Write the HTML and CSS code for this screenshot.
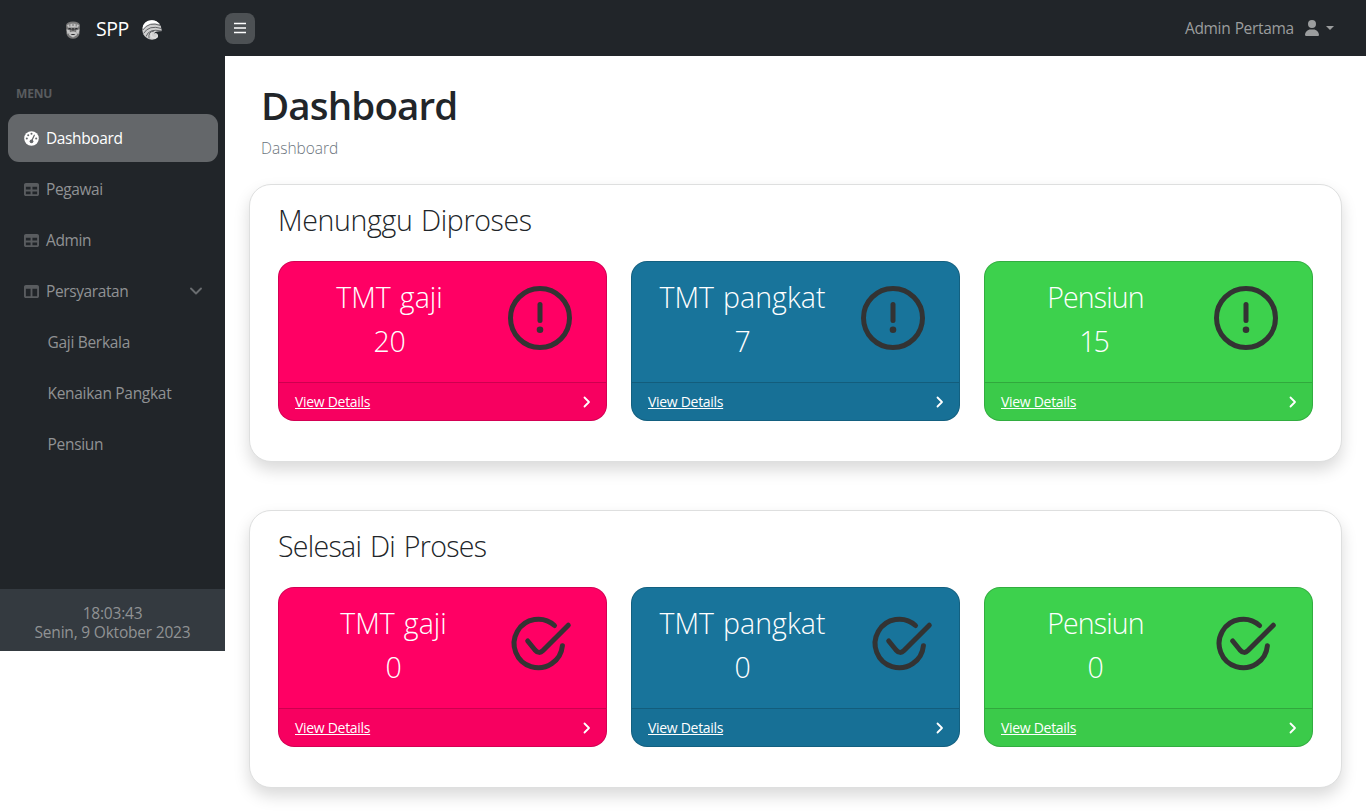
FILE: index.html
```html
<!DOCTYPE html>
<html lang="id">
<head>
<meta charset="utf-8">
<title>Dashboard - SPP</title>
<link rel="stylesheet" href="styles.css">
</head>
<body>
<svg class="defs" aria-hidden="true">
  <symbol id="table" viewBox="0 0 512 512"><path fill-rule="evenodd" d="M64 256v-96h160v96H64zm0 64h160v96H64v-96zm224 96v-96h160v96H288zm160-160H288v-96h160v96zM64 32C28.700 32 0 60.700 0 96v320c0 35.300 28.700 64 64 64h384c35.300 0 64-28.700 64-64V96c0-35.300-28.700-64-64-64H64z"/></symbol>
  <symbol id="columns" viewBox="0 0 512 512"><path fill-rule="evenodd" d="M0 96c0-35.300 28.700-64 64-64h384c35.300 0 64 28.700 64 64v320c0 35.300-28.700 64-64 64H64c-35.300 0-64-28.700-64-64V96zm64 64v256h160V160H64zm384 0H288v256h160V160z"/></symbol>
  <symbol id="right" viewBox="0 0 8 14"><path d="M1.500 2.500 6 7l-4.500 4.500" fill="none" stroke="currentColor" stroke-width="1.800" stroke-linecap="round" stroke-linejoin="round"/></symbol>
  <symbol id="alert" viewBox="0 0 64 64"><circle cx="32" cy="32" r="29.500" fill="none" stroke="currentColor" stroke-width="5"/><path d="M32 18.500v16" stroke="currentColor" stroke-width="5" stroke-linecap="round"/><circle cx="32" cy="43.700" r="3.300"/></symbol>
  <symbol id="check" viewBox="0 0 64 64"><path d="M46.500 13.500A24.200 24.200 0 1 0 54.400 33.700M19.700 29l7.300 9q4 4.500 8 .5L60.300 13.200" fill="none" stroke="currentColor" stroke-width="5" stroke-linecap="round"/></symbol>
</svg>
<header class="topbar">
  <a class="brand">
    <svg class="brand-crest" viewBox="0 0 16 18"><path d="M1 4Q2 .5 8 .5T15 4L14.500 13Q13 17.700 8 17.700T1.500 13Z" fill="#777"/><path d="M2 4Q8 1 14 4L13 6.500H3ZM1.500 8.500l3-.5.5 4-2.500 1zM14.500 8.500l-3-.5-.5 4 2.500 1zM4.500 11.500q3.500-2 7 0l.5 2.500-4 2.500L4 14z" fill="#c4c4c4"/><path d="M4 2.500h1.500v3H4zM10.500 2.500H12v3h-1.500zM7.200 2h1.600v3H7.200z" fill="#8d8d8d"/><path d="M2.500 8.500q2-3 4.500 0zM9 8.500q2.500-3 4.500 0zM5.500 13.500q2.500-1 5 0l-1 .6h-3z" fill="#202124"/><path d="M7 7h2v2.500H7z" fill="#444"/></svg>
    <span class="brand-name">SPP</span>
    <svg class="brand-wave" viewBox="0 0 20 20"><circle cx="10" cy="10" r="9.700" fill="#cfcfcf"/><path d="M.5 8Q2 0 10 .3 15 .5 17.500 4 8 1 1 9z" fill="#fff"/><path d="M.8 10Q7 1 18.500 5.500M1.500 13.500Q7 4.500 19.500 8.500M4 16.500Q7 8 19.500 11M7 18.500Q6 11.500 12 11" fill="none" stroke="#45484b" stroke-width=".8"/><path d="M20 11.300Q13.500 10.500 12 13.500q2-1 3.500.5 1.500 2.500-1 4L13 20h7z" fill="#212529"/><path d="M9.500 13q-1.500 4.500 3.500 5 3-.5 2-3" fill="none" stroke="#ddd" stroke-width="1.500"/></svg>
  </a>
  <button class="toggle" aria-label="Menu"><svg viewBox="0 0 14 14"><path d="M1 2.500h12M1 7h12M1 11.500h12" stroke="currentColor" stroke-width="1.700"/></svg></button>
  <div class="user"><span class="user-name">Admin Pertama</span><svg class="user-icon" viewBox="0 0 448 512"><path d="M224 256a128 128 0 1 0 0-256 128 128 0 1 0 0 256zm-45.700 48C79.800 304 0 383.800 0 482.300 0 498.700 13.300 512 29.700 512h388.600c16.400 0 29.700-13.300 29.700-29.700C448 383.800 368.200 304 269.700 304h-91.400z"/></svg><i class="caret"></i></div>
</header>
<div class="layout">
  <aside class="sidebar">
    <div class="heading">MENU</div>
    <nav class="menu">
      <a class="link active"><svg class="link-icon" viewBox="0 0 16 16"><circle cx="8" cy="8" r="7.800"/><g fill="#64676a"><circle cx="8" cy="3" r="1.100"/><circle cx="4.500" cy="4.500" r="1.100"/><circle cx="3" cy="8" r="1.100"/><circle cx="13" cy="8" r="1.100"/><circle cx="8" cy="11" r="2"/></g><path d="m8 11 3-6.500" stroke="#64676a" stroke-width="1.300" stroke-linecap="round"/></svg><span>Dashboard</span></a>
      <a class="link"><svg class="link-icon"><use href="#table"/></svg><span>Pegawai</span></a>
      <a class="link"><svg class="link-icon"><use href="#table"/></svg><span>Admin</span></a>
      <a class="link"><svg class="link-icon"><use href="#columns"/></svg><span>Persyaratan</span><svg class="down" viewBox="0 0 14 16"><path d="m2 5.500 5 5 5-5" fill="none" stroke="currentColor" stroke-width="1.900" stroke-linecap="round" stroke-linejoin="round"/></svg></a>
      <a class="link sub">Gaji Berkala</a>
      <a class="link sub">Kenaikan Pangkat</a>
      <a class="link sub">Pensiun</a>
    </nav>
    <footer class="clock">18:03:43<br>Senin, 9 Oktober 2023</footer>
  </aside>
  <main class="content">
    <h1 class="title">Dashboard</h1>
    <div class="crumb">Dashboard</div>
    <section class="panel">
      <h2 class="panel-title waiting">Menunggu Diproses</h2>
      <div class="cards">
        <article class="card pink"><div class="card-body"><div class="stat"><div class="label">TMT gaji</div><div>20</div></div><svg class="status"><use href="#alert"/></svg></div><div class="card-foot"><a class="details">View Details</a><svg class="arrow"><use href="#right"/></svg></div></article>
        <article class="card blue"><div class="card-body"><div class="stat"><div class="label">TMT pangkat</div><div>7</div></div><svg class="status"><use href="#alert"/></svg></div><div class="card-foot"><a class="details">View Details</a><svg class="arrow"><use href="#right"/></svg></div></article>
        <article class="card green"><div class="card-body"><div class="stat"><div class="label">Pensiun</div><div class="narrow">15</div></div><svg class="status"><use href="#alert"/></svg></div><div class="card-foot"><a class="details">View Details</a><svg class="arrow"><use href="#right"/></svg></div></article>
      </div>
    </section>
    <section class="panel">
      <h2 class="panel-title done">Selesai Di Proses</h2>
      <div class="cards">
        <article class="card pink"><div class="card-body finished-pay"><div class="stat"><div class="label">TMT gaji</div><div>0</div></div><svg class="status"><use href="#check"/></svg></div><div class="card-foot"><a class="details">View Details</a><svg class="arrow"><use href="#right"/></svg></div></article>
        <article class="card blue"><div class="card-body finished-rank"><div class="stat"><div class="label">TMT pangkat</div><div>0</div></div><svg class="status"><use href="#check"/></svg></div><div class="card-foot"><a class="details">View Details</a><svg class="arrow"><use href="#right"/></svg></div></article>
        <article class="card green"><div class="card-body finished-pension"><div class="stat"><div class="label">Pensiun</div><div>0</div></div><svg class="status"><use href="#check"/></svg></div><div class="card-foot"><a class="details">View Details</a><svg class="arrow"><use href="#right"/></svg></div></article>
      </div>
    </section>
  </main>
</div>
</body>
</html>
```
FILE: styles.css
```css
* { box-sizing: border-box; }
body { margin: 0; height: 812px; overflow: hidden; background: #fff; color: #212529; font: 16px/24px "Segoe UI", "Open Sans", "Noto Sans", sans-serif; }
svg { display: block; flex: none; fill: currentColor; }
.defs { position: absolute; width: 0; height: 0; }

.topbar { display: flex; align-items: center; height: 56px; background: #212529; color: #9b9d9e; }
.brand { display: flex; align-items: center; width: 225px; padding: 3px 0 0 65px; color: #fff; }
.brand-crest { width: 16px; height: 18px; margin-top: 1px; }
.brand-name { width: 33px; margin: -2px 13px 0 15px; font-size: 19.500px; letter-spacing: -.4px; white-space: nowrap; }
.brand-wave { width: 20px; height: 20px; }
.toggle { display: flex; align-items: center; justify-content: center; width: 30px; height: 31px; padding: 0; border: 0; border-radius: 8px; background: #4d5154; color: #fff; }
.toggle svg { width: 14px; height: 14px; }
.user { display: flex; align-items: center; margin-left: auto; padding-right: 32px; }
.user-name { width: 120px; font-size: 15.500px; letter-spacing: -.34px; word-spacing: .6px; white-space: nowrap; }
.user-icon { width: 14px; height: 16px; }
.caret { margin-left: 7px; border: 4.500px solid transparent; border-top-color: currentColor; border-bottom: 0; }

.layout { display: flex; align-items: flex-start; }
.sidebar { display: flex; flex-direction: column; flex: none; width: 225px; height: 595px; background: #212529; color: #909294; }
.heading { padding: 29px 16px 11px; font-size: 12px; line-height: 18px; font-weight: 700; color: #595c5f; letter-spacing: -.15px; }
.menu { display: flex; flex-direction: column; gap: 3px; padding: 0 7px 0 8px; }
.link { display: flex; align-items: center; height: 48px; padding: 0 15px 0 16px; border-radius: 11px; font-size: 15.500px; letter-spacing: -.39px; }
.link-icon { width: 15px; height: 15px; margin-right: 7px; color: #595c5f; }
.active { background: #64676a; color: #fff; }
.active .link-icon { color: #fff; }
.down { width: 14px; height: 16px; margin-left: auto; color: #696c6f; }
.sub { padding-left: 39.500px; letter-spacing: -.3px; }
.clock { height: 62px; margin-top: auto; padding-top: 15px; background: #343a40; text-align: center; font-size: 15.500px; line-height: 19px; letter-spacing: -.2px; }

.content { flex: 1; padding: 26px 24px 0 24px; }
.title { margin: 0 0 0 12px; font-size: 38.500px; line-height: 47px; font-weight: 600; letter-spacing: -.85px; }
.crumb { margin: 7px 0 24px 12px; color: #6c757d; font-size: 15.500px; font-weight: 300; }
.panel { height: 278px; margin-bottom: 48px; padding: 17px 28px; border: 1px solid #dedfdf; border-radius: 22px; background: #fff; box-shadow: 0 8px 16px rgba(0, 0, 0, .15); }
.panel-title { margin: 0 0 23px; font-size: 28.500px; line-height: 36px; font-weight: 300; }
.waiting { letter-spacing: -.35px; word-spacing: 1.500px; }
.done { letter-spacing: -.7px; word-spacing: 2px; }
.cards { display: grid; grid-template-columns: repeat(3, 1fr); gap: 24px; }
.card { display: flex; flex-direction: column; height: 160px; overflow: hidden; border: 1px solid rgba(0, 0, 0, .17); border-radius: 16px; color: #fff; }
.pink { background: #ff0064; }
.blue { background: #18749b; }
.green { background: #3dd14d; }
.card-body { display: flex; flex: 1; padding: 13px 0 0; }
.stat { width: 221px; text-align: center; font-size: 28.500px; line-height: 44px; font-weight: 300; letter-spacing: -.3px; }
.label { letter-spacing: .05px; word-spacing: 1.500px; }
.green .label { letter-spacing: -.85px; }
.narrow { padding-right: 4px; letter-spacing: -2px; }
.status { width: 64px; height: 64px; margin: 11px 0 0 8px; color: #333; }
.finished-pay .stat { width: 229px; }
.finished-pay .status { margin-left: 0; }
.finished-rank .status { margin-left: 16px; }
.finished-pension .status { margin-left: 7px; }
.card-foot { display: flex; align-items: center; justify-content: space-between; height: 38px; padding: 0 15px 0 16px; border-top: 1px solid rgba(0, 0, 0, .17); background: rgba(0, 0, 0, .03); }
.details { font-size: 14px; line-height: 21px; letter-spacing: -.3px; text-decoration: underline; }
.arrow { width: 8px; height: 14px; }
```
